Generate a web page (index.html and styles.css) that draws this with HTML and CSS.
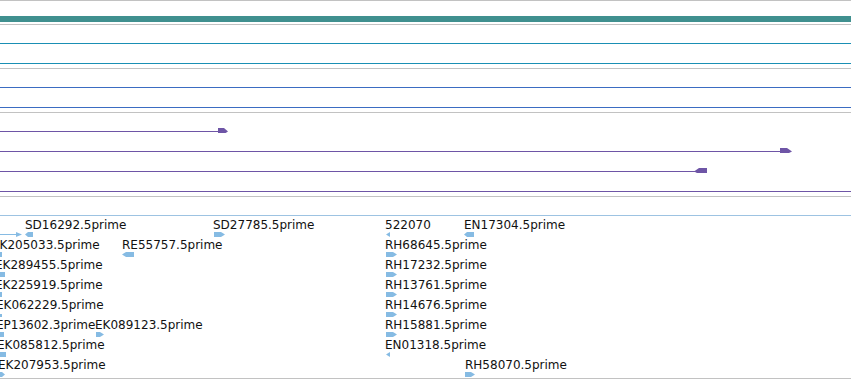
FILE: index.html
```html
<!DOCTYPE html>
<html>
<head>
<meta charset="utf-8">
<link rel="stylesheet" href="styles.css">
</head>
<body>
<div class="browser">
  <div class="track track-bar"><div class="bar"></div></div>

  <div class="track track-lines">
    <svg class="row" width="851" height="20"><rect class="c-teal" x="0" y="18" width="851" height="1"/></svg>
    <svg class="row" width="851" height="20"><rect class="c-teal" x="0" y="18" width="851" height="1"/></svg>
  </div>

  <div class="track track-lines">
    <svg class="row" width="851" height="20"><rect class="c-blue" x="0" y="18" width="851" height="1"/></svg>
    <svg class="row" width="851" height="20"><rect class="c-blue" x="0" y="18" width="851" height="1"/></svg>
  </div>

  <div class="track track-lines">
    <svg class="row" width="851" height="20"><rect class="c-purple" x="0" y="18" width="219" height="1"/><polygon class="c-purple" points="218,15 224,15 228,18.5 224,21 218,21"/></svg>
    <svg class="row" width="851" height="20"><rect class="c-purple" x="0" y="18" width="781" height="1"/><polygon class="c-purple" points="780,15 787,15 792,18.5 787,21 780,21"/></svg>
    <svg class="row" width="851" height="20"><rect class="c-purple" x="0" y="18" width="696" height="1"/><polygon class="c-purple" points="694,18.5 699,15 707,15 707,21 699,21"/></svg>
    <svg class="row" width="851" height="20"><rect class="c-purple" x="0" y="18" width="851" height="1"/></svg>
  </div>

  <div class="track track-last">
    <svg class="row" width="851" height="20"><rect class="c-light" x="0" y="18" width="851" height="1"/></svg>

    <div class="lrow">
      <svg class="g" style="left:0px" width="23" height="5" viewBox="0 0 23 5"><rect class="c-feat" x="0" y="2" width="17" height="1"/><polygon class="c-feat" points="16,0 22,2.5 16,5"/></svg>
      <span class="lbl" style="left:25px">SD16292.5prime</span>
      <svg class="g" style="left:25px" width="8" height="5" viewBox="0 0 8 5"><polygon class="c-feat" points="0,2.5 3,0 8,0 8,5 3,5"/></svg>
      <span class="lbl" style="left:213px">SD27785.5prime</span>
      <svg class="g" style="left:214px" width="11" height="5" viewBox="0 0 11 5"><polygon class="c-feat" points="0,0 7,0 11,2.5 7,5 0,5"/></svg>
      <span class="lbl" style="left:385px">522070</span>
      <svg class="g" style="left:386px" width="4" height="5" viewBox="0 0 4 5"><polygon class="c-feat" points="0,2.5 4,0 4,5"/></svg>
      <span class="lbl" style="left:464px">EN17304.5prime</span>
      <svg class="g" style="left:464px" width="10" height="5" viewBox="0 0 10 5"><polygon class="c-feat" points="0,2.5 3,0 10,0 10,5 3,5"/></svg>
    </div>

    <div class="lrow">
      <span class="lbl" style="left:-8px">EK205033.5prime</span>
      <svg class="g" style="left:0px" width="2" height="5" viewBox="0 0 2 5"><rect class="c-feat" x="0" y="0" width="2" height="5"/></svg>
      <span class="lbl" style="left:122px">RE55757.5prime</span>
      <svg class="g" style="left:122px" width="12" height="5" viewBox="0 0 12 5"><polygon class="c-feat" points="0,2.5 4,0 12,0 12,5 4,5"/></svg>
      <span class="lbl" style="left:385px">RH68645.5prime</span>
      <svg class="g" style="left:386px" width="11" height="5" viewBox="0 0 11 5"><polygon class="c-feat" points="0,0 7,0 11,2.5 7,5 0,5"/></svg>
    </div>

    <div class="lrow">
      <span class="lbl" style="left:-5px">EK289455.5prime</span>
      <svg class="g" style="left:0px" width="5" height="5" viewBox="0 0 5 5"><rect class="c-feat" x="0" y="0" width="5" height="5"/></svg>
      <span class="lbl" style="left:385px">RH17232.5prime</span>
      <svg class="g" style="left:386px" width="11" height="5" viewBox="0 0 11 5"><polygon class="c-feat" points="0,0 7,0 11,2.5 7,5 0,5"/></svg>
    </div>

    <div class="lrow">
      <span class="lbl" style="left:-5px">EK225919.5prime</span>
      <svg class="g" style="left:0px" width="2" height="5" viewBox="0 0 2 5"><rect class="c-feat" x="0" y="0" width="2" height="5"/></svg>
      <span class="lbl" style="left:385px">RH13761.5prime</span>
      <svg class="g" style="left:386px" width="11" height="5" viewBox="0 0 11 5"><polygon class="c-feat" points="0,0 7,0 11,2.5 7,5 0,5"/></svg>
    </div>

    <div class="lrow">
      <span class="lbl" style="left:-4px">EK062229.5prime</span>
      <svg class="g" style="left:0px" width="2" height="5" viewBox="0 0 2 5"><rect class="c-feat" x="0" y="2" width="2" height="3"/></svg>
      <span class="lbl" style="left:385px">RH14676.5prime</span>
      <svg class="g" style="left:386px" width="11" height="5" viewBox="0 0 11 5"><polygon class="c-feat" points="0,0 7,0 11,2.5 7,5 0,5"/></svg>
    </div>

    <div class="lrow">
      <span class="lbl" style="left:-4px">EP13602.3prime</span>
      <svg class="g" style="left:0px" width="4" height="5" viewBox="0 0 4 5"><rect class="c-feat" x="0" y="0" width="4" height="5"/></svg>
      <span class="lbl" style="left:95px">EK089123.5prime</span>
      <svg class="g" style="left:96px" width="8" height="5" viewBox="0 0 8 5"><polygon class="c-feat" points="0,0 4,0 8,2.5 4,5 0,5"/></svg>
      <span class="lbl" style="left:385px">RH15881.5prime</span>
      <svg class="g" style="left:386px" width="11" height="5" viewBox="0 0 11 5"><polygon class="c-feat" points="0,0 7,0 11,2.5 7,5 0,5"/></svg>
    </div>

    <div class="lrow">
      <span class="lbl" style="left:-3px">EK085812.5prime</span>
      <svg class="g" style="left:0px" width="6" height="5" viewBox="0 0 6 5"><rect class="c-feat" x="0" y="0" width="6" height="5"/></svg>
      <span class="lbl" style="left:385px">EN01318.5prime</span>
      <svg class="g" style="left:386px" width="4" height="5" viewBox="0 0 4 5"><polygon class="c-feat" points="0,2.5 4,0 4,5"/></svg>
    </div>

    <div class="lrow">
      <span class="lbl" style="left:-2px">EK207953.5prime</span>
      <svg class="g" style="left:0px" width="5" height="5" viewBox="0 0 5 5"><polygon class="c-feat" points="0,0 2,0 5,2.5 2,5 0,5"/></svg>
      <span class="lbl" style="left:465px">RH58070.5prime</span>
      <svg class="g" style="left:465px" width="10" height="5" viewBox="0 0 10 5"><polygon class="c-feat" points="0,0 6,0 10,2.5 6,5 0,5"/></svg>
    </div>
  </div>
</div>
</body>
</html>
```

FILE: styles.css
```css
html, body {
  margin: 0;
  padding: 0;
  background: #ffffff;
}

body {
  width: 851px;
  height: 380px;
  overflow: hidden;
  font-family: "DejaVu Sans", "Liberation Sans", sans-serif;
}

.browser {
  display: flex;
  flex-direction: column;
  width: 851px;
}

.track {
  border-top: 1px solid #c2c2c2;
}

.track-bar {
  height: 23px;
}

.bar {
  margin-top: 15px;
  height: 6px;
  background: #40908f;
}

.track-lines {
  padding-bottom: 3px;
}

.row {
  display: block;
  width: 851px;
  height: 20px;
}

.track-last {
  border-bottom: 1px solid #c2c2c2;
  padding-bottom: 1px;
}

.lrow {
  position: relative;
  height: 20px;
}

.lbl {
  position: absolute;
  top: 0;
  font-size: 12px;
  line-height: 16px;
  white-space: nowrap;
  color: #111111;
}

.g {
  position: absolute;
  top: 15px;
  display: block;
}

.c-teal { fill: #1a8fb4; }
.c-blue { fill: #3b6cc2; }
.c-purple { fill: #6e55a6; }
.c-light { fill: #9dc3e2; }
.c-feat { fill: #86bbe3; }
```
